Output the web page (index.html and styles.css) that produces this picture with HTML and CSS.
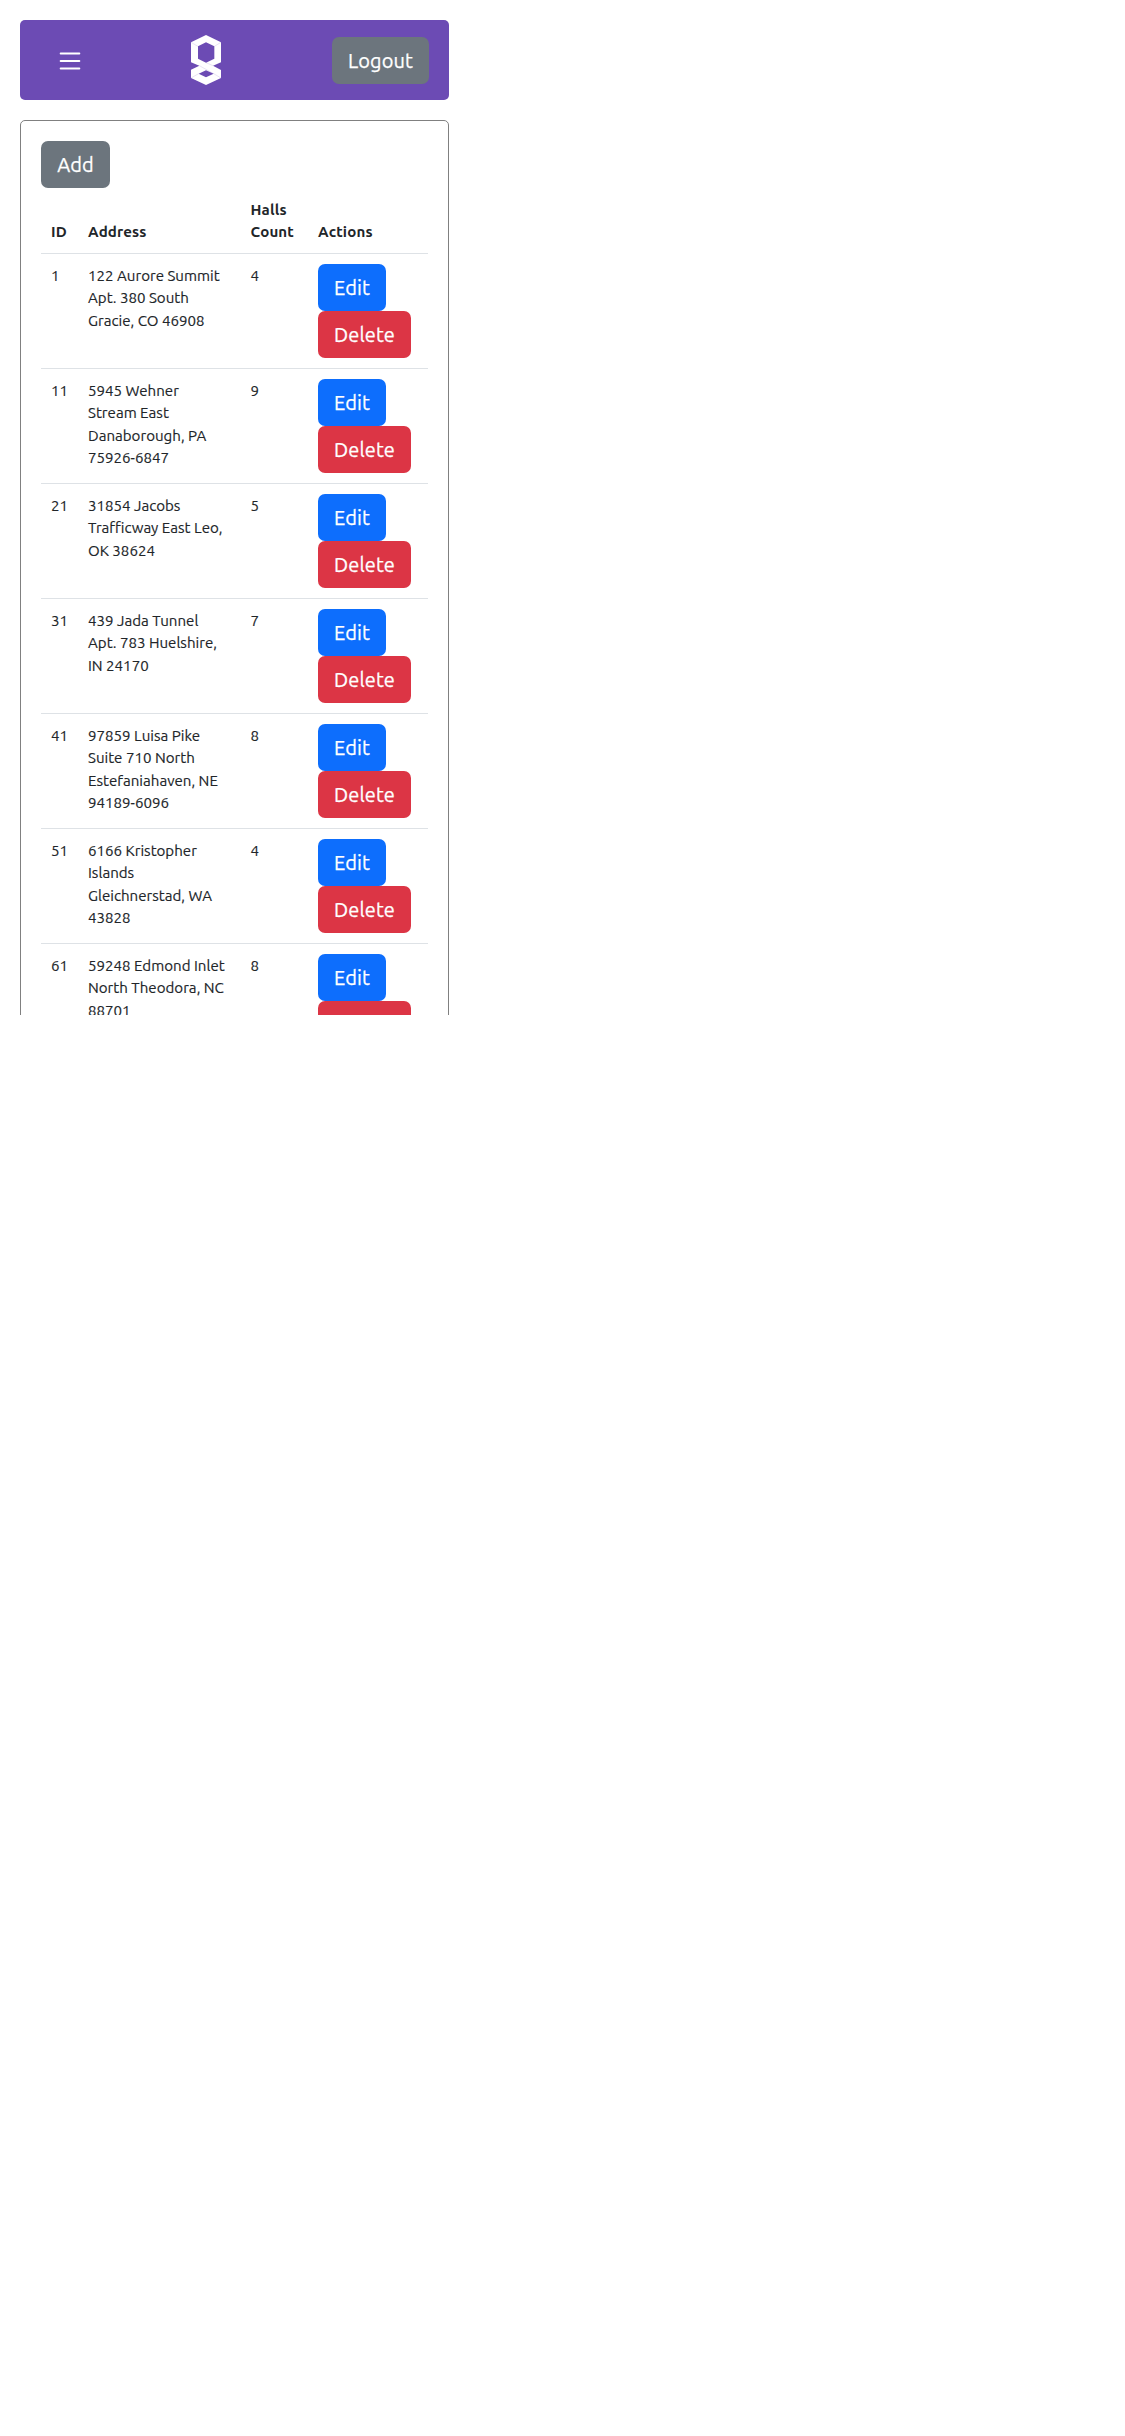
FILE: index.html
```
<!DOCTYPE html>
<html lang="en">
<head>
<meta charset="utf-8">
<title>Cinemas</title>
<link rel="stylesheet" href="styles.css">
</head>
<body>
<div class="app">
  <header class="navbar">
    <svg class="menu" viewBox="0 0 16 16" fill="none" stroke="#fff" stroke-linecap="round"><path d="M3 4h10M3 8h10M3 12h10"/></svg>
    <svg class="logo" viewBox="0 0 90 150">
      <path fill="#fff" fill-rule="evenodd" d="M45 0L90 22V82L66 92L90 105V129L45 150L0 129V104L25 92L0 82V22ZM45 22L21 34V71L45 83L70 71V34ZM45 106L23 116L45 127L68 116Z"/>
      <path fill="none" stroke="#6c4bb4" stroke-width="1" opacity=".45" d="M0 22L21 34M90 22L70 34M25 92L68 116M45 83L66 92M0 129L23 116M68 116L90 129"/>
    </svg>
    <button class="btn secondary logout">Logout</button>
  </header>
  <main class="panel">
    <button class="btn secondary add">Add</button>
    <table class="table">
      <colgroup><col class="c-id"><col class="c-address"><col class="c-halls"><col class="c-actions"></colgroup>
      <thead><tr><th>ID</th><th>Address</th><th>Halls<br>Count</th><th>Actions</th></tr></thead>
      <tbody>
        <tr><td>1</td><td>122 Aurore Summit<br>Apt. 380 South<br>Gracie, CO 46908</td><td>4</td><td class="actions"><button class="btn primary">Edit</button><button class="btn danger">Delete</button></td></tr>
        <tr><td>11</td><td>5945 Wehner<br>Stream East<br>Danaborough, PA<br>75926-6847</td><td>9</td><td class="actions"><button class="btn primary">Edit</button><button class="btn danger">Delete</button></td></tr>
        <tr><td>21</td><td>31854 Jacobs<br>Trafficway East Leo,<br>OK 38624</td><td>5</td><td class="actions"><button class="btn primary">Edit</button><button class="btn danger">Delete</button></td></tr>
        <tr><td>31</td><td>439 Jada Tunnel<br>Apt. 783 Huelshire,<br>IN 24170</td><td>7</td><td class="actions"><button class="btn primary">Edit</button><button class="btn danger">Delete</button></td></tr>
        <tr><td>41</td><td>97859 Luisa Pike<br>Suite 710 North<br>Estefaniahaven, NE<br>94189-6096</td><td>8</td><td class="actions"><button class="btn primary">Edit</button><button class="btn danger">Delete</button></td></tr>
        <tr><td>51</td><td>6166 Kristopher<br>Islands<br>Gleichnerstad, WA<br>43828</td><td>4</td><td class="actions"><button class="btn primary">Edit</button><button class="btn danger">Delete</button></td></tr>
        <tr><td>61</td><td>59248 Edmond Inlet<br>North Theodora, NC<br>88701</td><td>8</td><td class="actions"><button class="btn primary">Edit</button><button class="btn danger">Delete</button></td></tr>
      </tbody>
    </table>
  </main>
</div>
</body>
</html>
```
FILE: styles.css
```
* { box-sizing: border-box; }
body {
  margin: 0;
  background: #fff;
  color: #212529;
  font: 15.1px/22.5px Ubuntu, "Noto Sans", sans-serif;
}
.app {
  width: 469px;
  height: 1015px;
  padding: 20px 20px 0;
  overflow: hidden;
}
.navbar {
  display: flex;
  align-items: center;
  justify-content: space-between;
  height: 80px;
  padding: 0 20px 0 35px;
  margin-bottom: 20px;
  border-radius: 5px;
  background: #6c4bb4;
}
.menu { width: 30px; height: 30px; margin-top: 2px; }
.logo { width: 30px; height: 50px; margin-left: -5px; }
.panel {
  padding: 20px;
  border: 1px solid #808080;
  border-radius: 5px;
}
.btn {
  display: block;
  height: 47px;
  padding: 1px 0 0;
  border: 0;
  border-radius: 7px;
  color: #fff;
  font: 20px/46px Ubuntu, "Noto Sans", sans-serif;
  letter-spacing: 0.1px;
  -webkit-text-stroke: 0.25px #fff;
  text-align: center;
}
.secondary { background: #6c757d; }
.primary { width: 68px; background: #0d6efd; }
.danger { width: 93px; background: #dc3545; }
.logout { width: 97px; margin-top: 1px; }
.add { width: 69px; }
.table {
  width: 387px;
  table-layout: fixed;
  border-collapse: separate;
  border-spacing: 0;
}
.c-id { width: 37px; }
.c-address { width: 162.5px; }
.c-halls { width: 67.5px; }
.c-actions { width: 120px; }
th, td {
  padding: 10.5px 10px 9.5px;
  border-bottom: 1px solid #dee2e6;
  text-align: left;
  vertical-align: top;
  white-space: nowrap;
}
th {
  letter-spacing: 0.15px;
  vertical-align: bottom;
}
td {
  -webkit-text-stroke: 0.15px #212529;
}
.actions { padding: 10px; }
```
